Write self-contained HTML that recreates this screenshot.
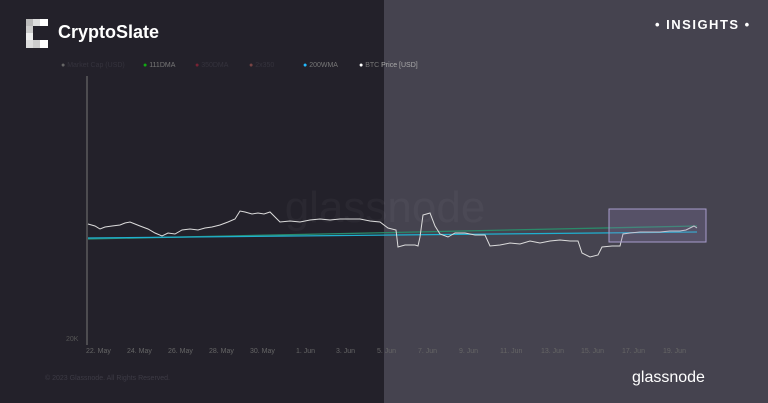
<!DOCTYPE html>
<html><head><style>
body{margin:0;width:768px;height:403px;overflow:hidden;font-family:"Liberation Sans",sans-serif;}
.l{position:absolute;left:0;top:0;width:384px;height:403px;background:#23212a}
.r{position:absolute;left:384px;top:0;width:384px;height:403px;background:#45434f}
.t{position:absolute;white-space:nowrap}
.lg{position:absolute;top:62px;font-size:7px;white-space:nowrap}
</style></head><body>
<div class="l"></div><div class="r"></div>
<svg width="768" height="403" style="position:absolute;left:0;top:0">
<g><rect x="26" y="19" width="7" height="7" fill="#bbb"/><rect x="33" y="19" width="7" height="7" fill="#ddd"/><rect x="40" y="19" width="8" height="7" fill="#fff"/><rect x="26" y="26" width="7" height="7" fill="#ccc"/><rect x="26" y="33" width="7" height="7" fill="#eee"/><rect x="26" y="40" width="7" height="8" fill="#ddd"/><rect x="33" y="40" width="7" height="8" fill="#ccc"/><rect x="40" y="40" width="8" height="8" fill="#fff"/></g>
<line x1="87" y1="76" x2="87" y2="345" stroke="#777" stroke-width="1"/>
<text x="385" y="222" font-size="44" fill="#ffffff" fill-opacity="0.035" text-anchor="middle" font-family="Liberation Sans">glassnode</text>
<line x1="88" y1="239" x2="697" y2="226" stroke="#2a8a6a" stroke-width="1.3"/>
<line x1="88" y1="238" x2="697" y2="232" stroke="#1fb0d0" stroke-width="1.3"/>
<polyline fill="none" stroke="#dcdcdc" stroke-width="1" points="88,224 95,226 100,229 105,227 112,226 120,225 125,223 130,222 135,224 140,226 148,229 155,233 162,236 168,233 175,234 182,230 190,229 198,230 205,228 212,227 220,225 228,222 235,219 240,211 245,212 252,214 258,213 264,214 270,212 275,217 280,222 290,221 300,222 310,220 320,219 330,220 340,219 350,219 360,219 370,221 380,222 388,228 396,230 398,247 405,245 415,245 418,246 420,237 423,215 430,213 435,226 440,234 448,237 455,233 465,233 475,235 485,235 490,246 500,245 510,243 520,244 530,241 540,243 550,241 560,240 570,241 578,241 582,253 590,257 598,255 602,247 612,246 620,246 623,234 630,233 640,232 650,232 660,232 670,231 680,231 686,230 690,228 694,226 697,228"/>
<rect x="609" y="209" width="97" height="33" fill="#8a7ab0" fill-opacity="0.25" stroke="#a89ccc" stroke-width="1"/>
</svg>
<div class="t" style="left:58px;top:22px;color:#fff;font-size:18px;font-weight:bold">CryptoSlate</div>
<div class="t" style="left:655px;top:17px;color:#fff;font-size:13px;font-weight:bold;letter-spacing:1.5px">• INSIGHTS •</div>
<div class="lg" style="left:61px"><span style="color:#666">●</span> <span style="color:#35333d">Market Cap (USD)</span></div>
<div class="lg" style="left:143px"><span style="color:#1a1">●</span> <span style="color:#777">111DMA</span></div>
<div class="lg" style="left:195px"><span style="color:#723">●</span> <span style="color:#35333d">350DMA</span></div>
<div class="lg" style="left:249px"><span style="color:#744">●</span> <span style="color:#35333d">2x350</span></div>
<div class="lg" style="left:303px"><span style="color:#2bf">●</span> <span style="color:#777">200WMA</span></div>
<div class="lg" style="left:359px"><span style="color:#fff">●</span> <span style="color:#777">BTC</span> <span style="color:#aaa">Price [USD]</span></div>
<div class="t" style="left:66px;top:336px;font-size:7px;color:#555">20K</div>
<div class="t" style="left:86px;top:348px;font-size:7px;color:#666"><span style="display:inline-block;width:41px">22. May</span><span style="display:inline-block;width:41px">24. May</span><span style="display:inline-block;width:41px">26. May</span><span style="display:inline-block;width:41px">28. May</span><span style="display:inline-block;width:46px">30. May</span><span style="display:inline-block;width:40px">1. Jun</span><span style="display:inline-block;width:41px">3. Jun</span><span style="display:inline-block;width:41px">5. Jun</span><span style="display:inline-block;width:41px">7. Jun</span><span style="display:inline-block;width:41px">9. Jun</span><span style="display:inline-block;width:41px">11. Jun</span><span style="display:inline-block;width:40px">13. Jun</span><span style="display:inline-block;width:41px">15. Jun</span><span style="display:inline-block;width:41px">17. Jun</span><span>19. Jun</span></div>
<div class="t" style="left:45px;top:375px;font-size:7px;color:#3d3b45">© 2023 Glassnode. All Rights Reserved.</div>
<div class="t" style="left:632px;top:369px;font-size:16px;color:#fff">glassnode</div>
</body></html>
